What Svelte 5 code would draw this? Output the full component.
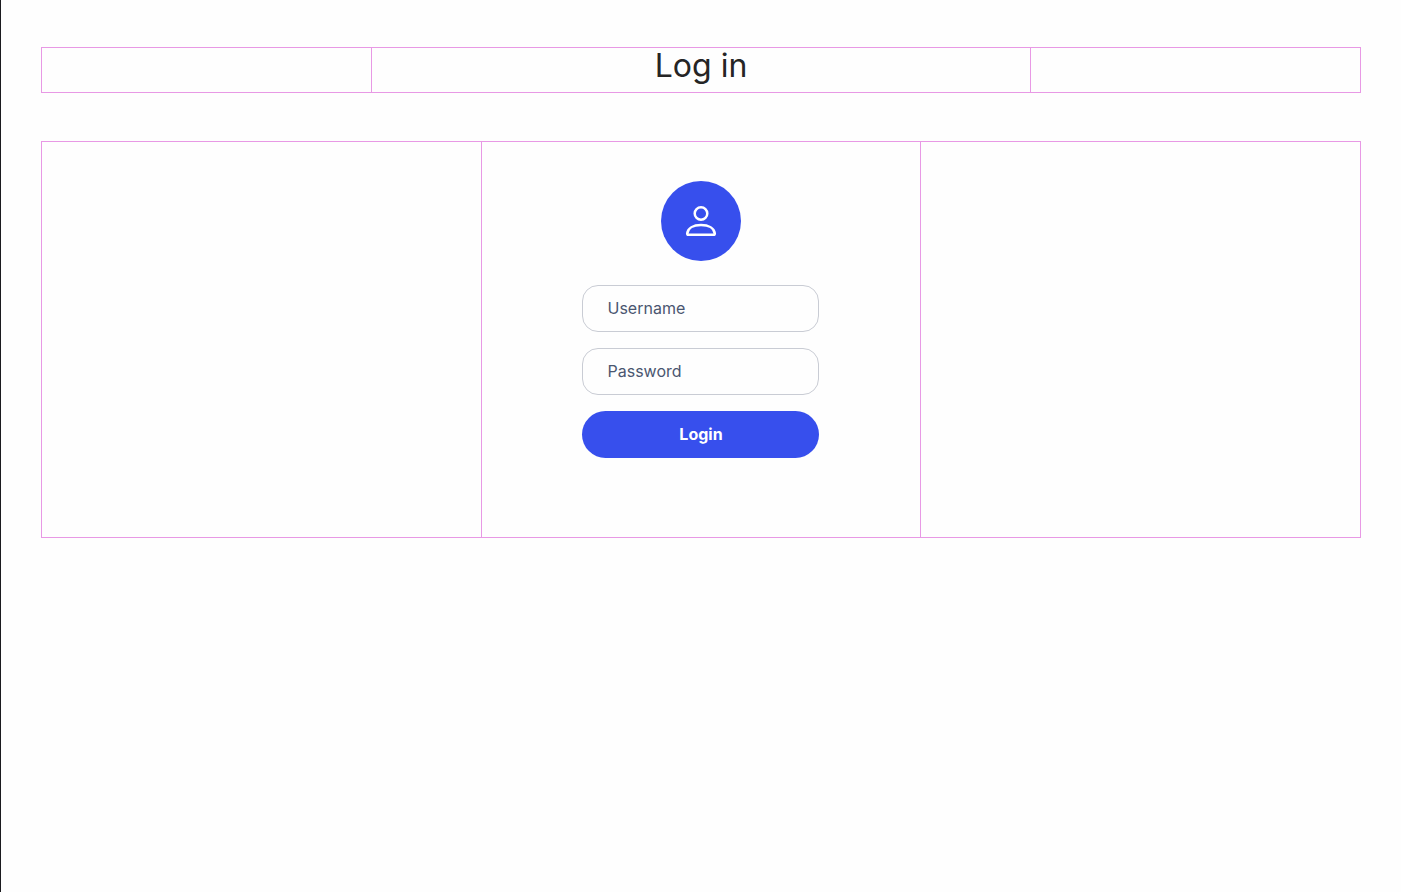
<script>
  let username = $state('');
  let password = $state('');
</script>

<div class="page">
  <header class="grid heading">
    <div class="cell"></div>
    <div class="cell"><h1>Log in</h1></div>
    <div class="cell"></div>
  </header>

  <main class="grid content">
    <div class="cell"></div>
    <div class="cell panel">
      <div class="avatar">
        <svg viewBox="0 0 32 32" width="32" height="32" fill="none" stroke="#fff" stroke-width="2.5" stroke-linejoin="round" aria-hidden="true">
          <circle cx="16" cy="8.5" r="6.3" />
          <path d="M3.4 29.8C2.6 29.8 2.2 29.4 2.2 28.5C2.8 23.2 8.3 20 16 20S29.2 23.2 29.8 28.5C29.8 29.4 29.4 29.8 28.6 29.8Z" />
        </svg>
      </div>
      <form onsubmit={(event) => event.preventDefault()}>
        <input type="text" aria-label="Username" placeholder="Username" autocomplete="username" bind:value={username} />
        <input type="password" aria-label="Password" placeholder="Password" autocomplete="current-password" bind:value={password} />
        <button type="submit">Login</button>
      </form>
    </div>
    <div class="cell"></div>
  </main>
</div>

<style>
  .page {
    box-sizing: border-box;
    min-height: 100vh;
    padding: 47px 40px;
    border-left: 1px solid #1b1b1f;
    background: #fefefe;
    color: #252525;
    font-family: Inter, sans-serif;
    display: flex;
    flex-direction: column;
    gap: 48px;
  }

  /* The grid's own background shows through the gaps as divider lines. */
  .grid {
    display: grid;
    gap: 1px;
    border: 1px solid #e899e5;
    background: #e899e5;
  }

  .heading {
    grid-template-columns: 1fr 2fr 1fr;
  }

  .content {
    grid-template-columns: repeat(3, 1fr);
  }

  .cell {
    background: #fefefe;
  }

  h1 {
    margin: 0;
    padding-bottom: 8px;
    font-size: 32px;
    line-height: 36px;
    font-weight: 400;
    text-align: center;
  }

  .panel {
    display: flex;
    flex-direction: column;
    align-items: center;
    gap: 24px;
    padding: 39px 24px 79px;
  }

  .avatar {
    display: grid;
    place-items: center;
    width: 80px;
    height: 80px;
    border-radius: 50%;
    background: #374fed;
  }

  form {
    display: flex;
    flex-direction: column;
    gap: 16px;
    width: 100%;
    max-width: 237px;
  }

  input,
  button {
    box-sizing: border-box;
    width: 100%;
    height: 47px;
    margin: 0;
    font-family: inherit;
    font-size: 16px;
  }

  input {
    padding: 0 24px 2px;
    border: 1px solid #c9ccd4;
    border-radius: 16px;
    background: #fefefe;
    color: #4a5670;
  }

  input::placeholder {
    color: #4a5670;
    opacity: 1;
  }

  button {
    padding: 0 24px 2px;
    border: 0;
    border-radius: 24px;
    background: #374fed;
    color: #fff;
    font-weight: 700;
    cursor: pointer;
  }
</style>
